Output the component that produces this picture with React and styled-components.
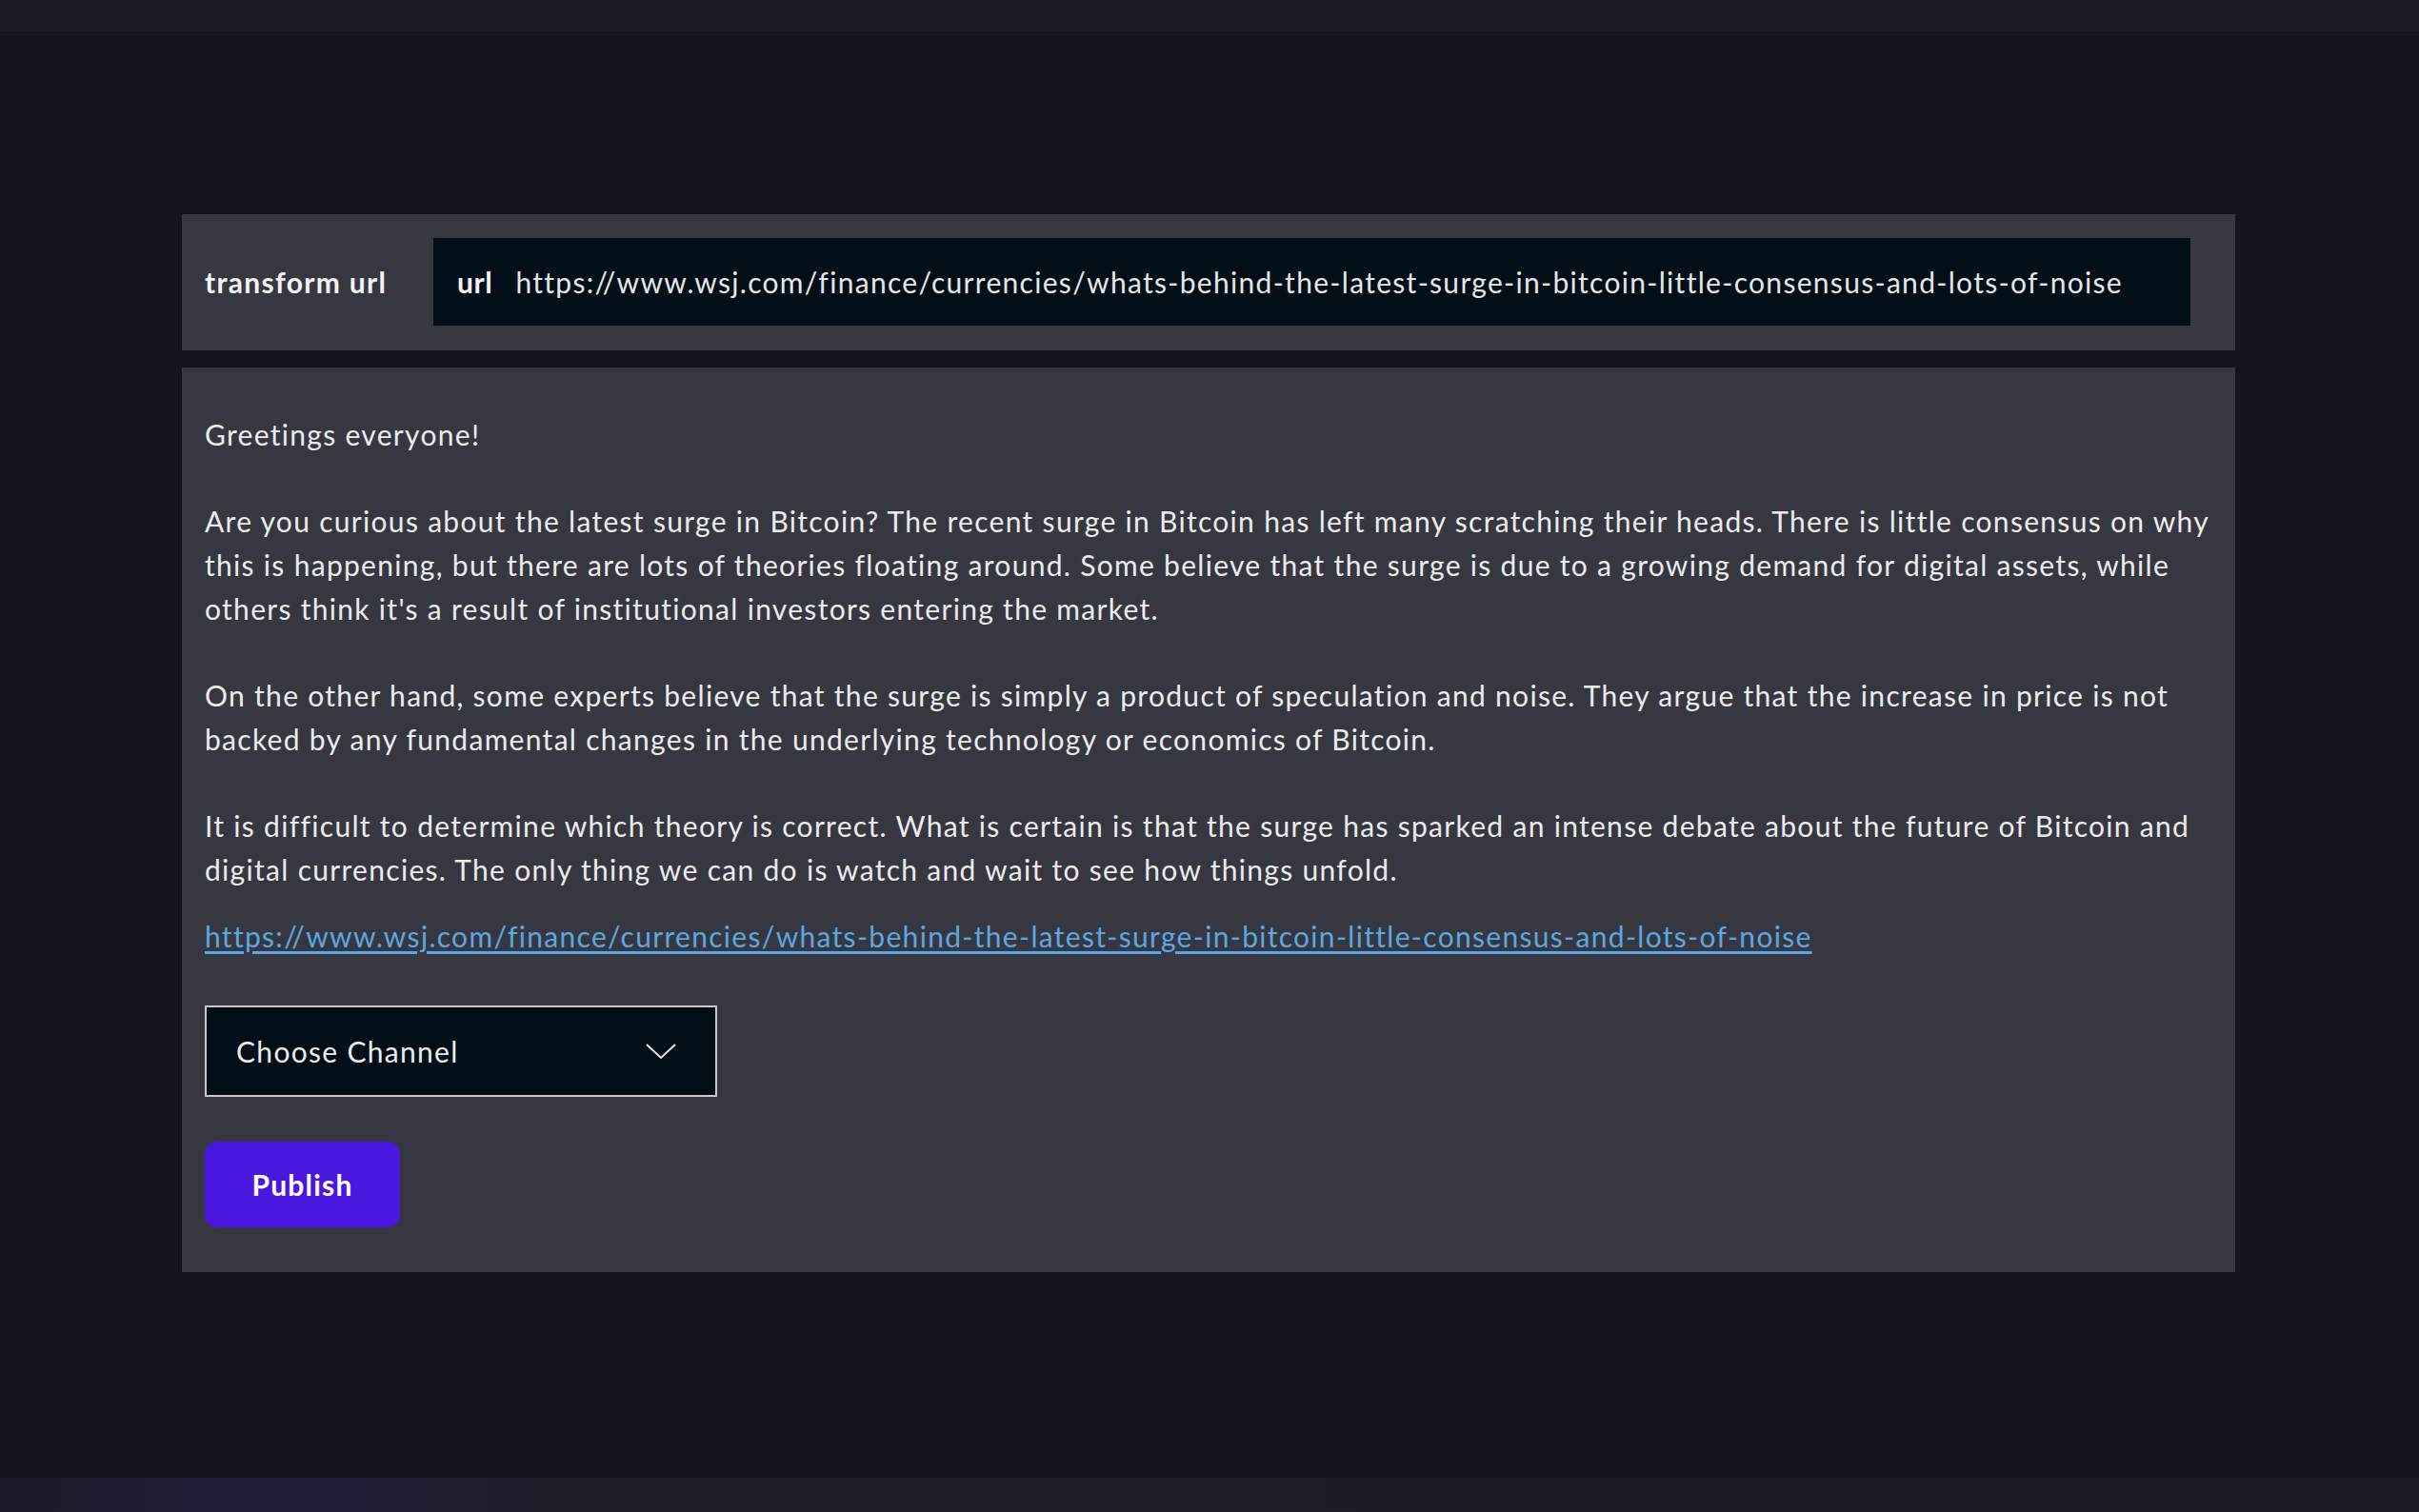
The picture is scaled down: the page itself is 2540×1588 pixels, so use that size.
import React from 'react'
import styled, { createGlobalStyle } from 'styled-components'

const URL =
  'https://www.wsj.com/finance/currencies/whats-behind-the-latest-surge-in-bitcoin-little-consensus-and-lots-of-noise'

const GlobalStyle = createGlobalStyle`
  html, body {
    margin: 0;
    padding: 0;
    background: #12151e;
  }
  * {
    box-sizing: border-box;
  }
`

const App = () => {
  return (
    <Page>
      <GlobalStyle />
      <TopBar />
      <Main>
        <Wrapper>
          <HeaderPanel>
            <HeaderLabel>transform url</HeaderLabel>
            <UrlField>
              <UrlTag>url</UrlTag>
              <UrlValue>{URL}</UrlValue>
            </UrlField>
          </HeaderPanel>

          <ContentPanel>
            <Paragraph>Greetings everyone!</Paragraph>
            <Paragraph>
              Are you curious about the latest surge in Bitcoin? The recent surge in Bitcoin has left many
              scratching their heads. There is little consensus on why this is happening, but there are lots of
              theories floating around. Some believe that the surge is due to a growing demand for digital assets,
              while others think it's a result of institutional investors entering the market.
            </Paragraph>
            <Paragraph>
              On the other hand, some experts believe that the surge is simply a product of speculation and noise.
              They argue that the increase in price is not backed by any fundamental changes in the underlying
              technology or economics of Bitcoin.
            </Paragraph>
            <Paragraph $last>
              It is difficult to determine which theory is correct. What is certain is that the surge has sparked
              an intense debate about the future of Bitcoin and digital currencies. The only thing we can do is
              watch and wait to see how things unfold.
            </Paragraph>
            <Link href="#">{URL}</Link>

            <Select>
              <span>Choose Channel</span>
              <svg width="34" height="19" viewBox="0 0 34 19" fill="none">
                <polyline points="2,2 17,16 32,2" stroke="#e6e6e6" strokeWidth="2" />
              </svg>
            </Select>

            <PublishButton>Publish</PublishButton>
          </ContentPanel>
        </Wrapper>
      </Main>
      <BottomBar />
    </Page>
  )
}

export default App

const Page = styled.div`
  min-height: 100vh;
  display: flex;
  flex-direction: column;
  background: #12151e;
  font-family: 'Lato', 'Open Sans', sans-serif;
  color: #ebebeb;
`

const TopBar = styled.div`
  height: 33px;
  background: #1c1d24;
  border-bottom: 1px solid #191b23;
`

const BottomBar = styled.div`
  height: 36px;
  background: linear-gradient(90deg, #1a1b2a 0%, #1e1e3a 12%, #1c1d25 25%, #1c1d24 100%);
`

const Main = styled.div`
  flex: 1;
  padding: 192px 193px 0 191px;
`

const Wrapper = styled.div`
  display: flex;
  flex-direction: column;
  gap: 18px;
`

const HeaderPanel = styled.div`
  display: flex;
  align-items: center;
  background: #373741;
  padding: 25px 47px 26px 24px;
`

const HeaderLabel = styled.div`
  width: 240px;
  font-size: 30px;
  font-weight: 700;
  letter-spacing: 1.3px;
  color: #f2f2f2;
`

const UrlField = styled.div`
  flex: 1;
  height: 92px;
  display: flex;
  align-items: center;
  gap: 24px;
  padding: 0 25px;
  background: #020f18;
`

const UrlTag = styled.span`
  font-size: 30px;
  font-weight: 700;
  letter-spacing: 0.6px;
  color: #f2f2f2;
`

const UrlValue = styled.span`
  font-size: 30px;
  letter-spacing: 1.3px;
  color: #e6e6e6;
  white-space: nowrap;
`

const ContentPanel = styled.div`
  display: flex;
  flex-direction: column;
  align-items: flex-start;
  background: #373741;
  padding: 47px 20px 47px 24px;
`

const Paragraph = styled.p`
  margin: 0 0 ${(p) => (p.$last ? '24px' : '45px')};
  font-size: 30px;
  line-height: 46px;
  letter-spacing: 1.3px;
  color: #ebebeb;
`

const Link = styled.a`
  font-size: 30px;
  line-height: 46px;
  letter-spacing: 1.3px;
  color: #5aa8e2;
  text-decoration: underline;
  text-underline-offset: 4px;
  margin-bottom: 50px;
`

const Select = styled.div`
  width: 538px;
  height: 96px;
  display: flex;
  align-items: center;
  justify-content: space-between;
  padding: 0 40px 0 31px;
  background: #020f18;
  border: 2px solid #c9c9c9;
  font-size: 30px;
  letter-spacing: 1.3px;
  color: #ebebeb;
  margin-bottom: 47px;
`

const PublishButton = styled.button`
  width: 205px;
  height: 90px;
  border: none;
  border-radius: 13px;
  background: #4a17de;
  color: #ffffff;
  font-family: inherit;
  font-size: 30px;
  font-weight: 700;
  letter-spacing: 1.2px;
  cursor: pointer;
`
